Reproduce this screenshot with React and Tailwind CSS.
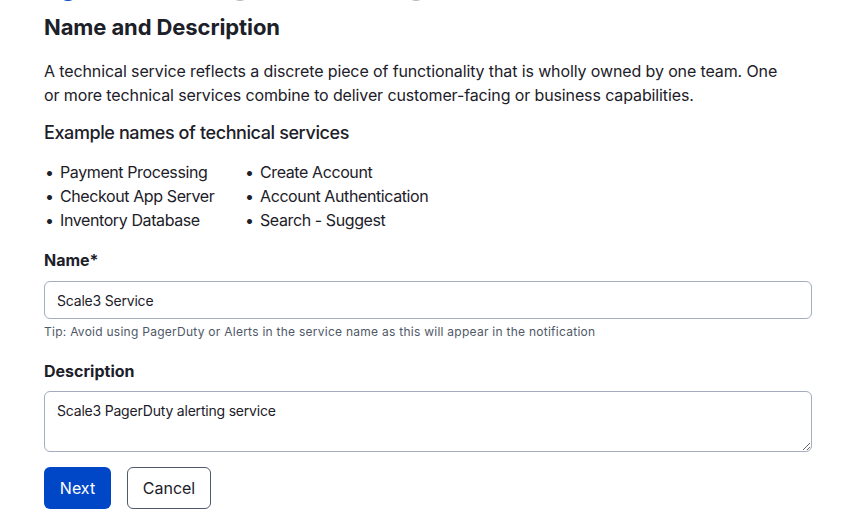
import React, { useState } from "react";

const examples = [
  ["Payment Processing", "Checkout App Server", "Inventory Database"],
  ["Create Account", "Account Authentication", "Search - Suggest"],
];

export default function App() {
  const [name, setName] = useState("Scale3 Service");
  const [description, setDescription] = useState(
    "Scale3 PagerDuty alerting service",
  );

  return (
    <div
      className="min-h-[518px] bg-white text-[#1c2029] pl-[44px] pr-[39px]"
      style={{ fontFamily: "Inter, 'Noto Sans', 'Liberation Sans', sans-serif" }}
    >
      {/* stepper, scrolled mostly out of view */}
      <div className="h-[1px] overflow-hidden flex items-end">
        <div className="ml-[14px] w-5 h-5 shrink-0 rounded-full bg-[#0047c8]" />
        <div className="ml-[152px] w-5 h-5 shrink-0 rounded-full bg-[#b4bac4]" />
        <div className="ml-[156px] w-5 h-5 shrink-0 rounded-full bg-[#b4bac4]" />
      </div>

      <h2 className="mt-[12px] text-[22px] leading-7 font-bold tracking-[-0.1px]">
        Name and Description
      </h2>

      <p className="mt-[18px] max-w-[740px] text-base leading-6 tracking-[-0.12px]">
        A technical service reflects a discrete piece of functionality that is
        wholly owned by one team. One or more technical services combine to
        deliver customer-facing or business capabilities.
      </p>

      <h3 className="mt-3 text-lg leading-7 font-medium tracking-[-0.4px]">
        Example names of technical services
      </h3>

      <div className="mt-[13px] flex tracking-[-0.4px]">
        {examples.map((col, i) => (
          <ul key={i} className={i === 0 ? "w-[200px]" : ""}>
            {col.map((item) => (
              <li key={item} className="flex text-base leading-6">
                <span className="w-4 pl-[1px]">•</span>
                {item}
              </li>
            ))}
          </ul>
        ))}
      </div>

      <label className="block mt-4 text-base leading-6 font-bold">Name*</label>
      <input
        value={name}
        onChange={(e) => setName(e.target.value)}
        className="mt-[9px] block w-full h-[38px] px-3 text-sm tracking-[-0.2px] text-[#1c2029] border border-[#a3adbd] rounded-md outline-none"
      />
      <p className="mt-[5px] text-xs leading-4 tracking-[0.26px] text-[#4f5867]">
        Tip: Avoid using PagerDuty or Alerts in the service name as this will
        appear in the notification
      </p>

      <label className="block mt-[19px] text-base leading-6 font-bold">
        Description
      </label>
      <textarea
        value={description}
        onChange={(e) => setDescription(e.target.value)}
        className="mt-2 block w-full h-[61px] px-3 py-[9px] text-sm leading-5 tracking-[-0.2px] text-[#1c2029] border border-[#a3adbd] rounded-md outline-none"
      />

      <div className="mt-[15px] flex gap-4">
        <button className="h-[42px] w-[67px] rounded-md bg-[#0047c8] text-white text-base">
          Next
        </button>
        <button className="h-[42px] w-[84px] rounded-md border border-[#4d5a6e] bg-white text-[#1c2029] text-base">
          Cancel
        </button>
      </div>
    </div>
  );
}
